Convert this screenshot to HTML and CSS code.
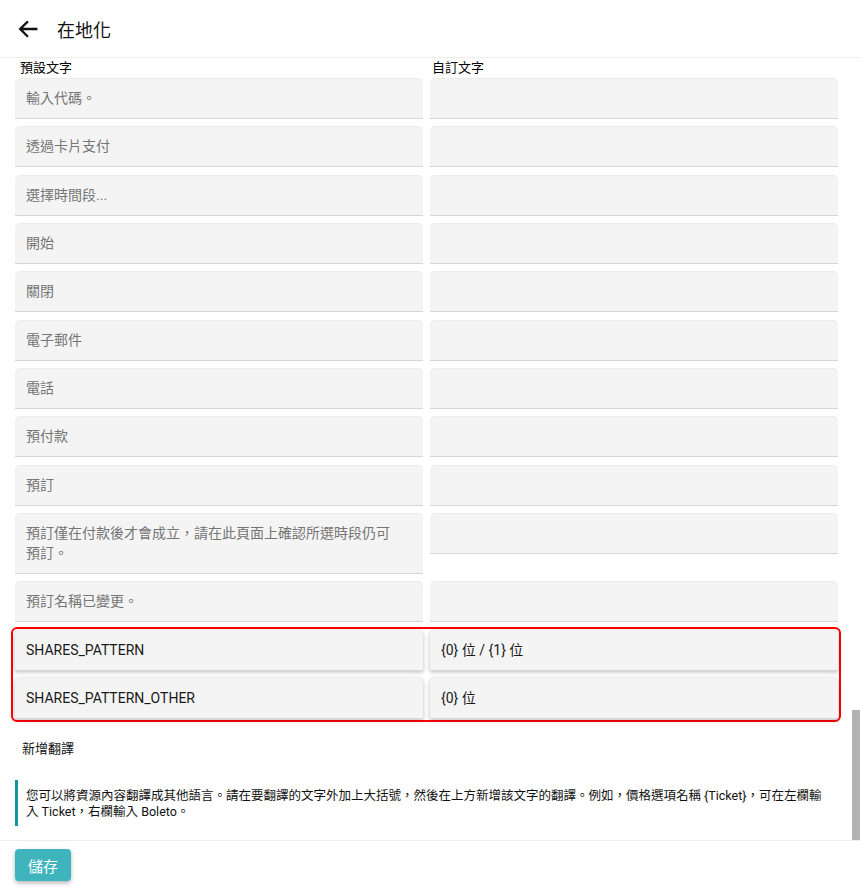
FILE: index.html
```html
<!DOCTYPE html>
<html lang="zh-Hant">
<head>
  <meta charset="UTF-8">
  <meta name="viewport" content="width=device-width, initial-scale=1.0">
  <title>在地化</title>
  <link rel="stylesheet" href="styles.css">
</head>
<body>
  <header class="topbar">
    <svg class="back-icon" viewBox="0 0 24 24" width="22" height="22">
      <path d="M21 12H4M11 4.5L3.5 12 11 19.5" fill="none" stroke="#111" stroke-width="2.6" stroke-linecap="square"/>
    </svg>
    <h1 class="title">在地化</h1>
  </header>

  <main class="content">
    <div class="col-labels">
      <span>預設文字</span>
      <span>自訂文字</span>
    </div>

    <div class="rows">
      <div class="row"><div class="field muted">輸入代碼。</div><div class="field"></div></div>
      <div class="row"><div class="field muted">透過卡片支付</div><div class="field"></div></div>
      <div class="row"><div class="field muted">選擇時間段...</div><div class="field"></div></div>
      <div class="row"><div class="field muted">開始</div><div class="field"></div></div>
      <div class="row"><div class="field muted">關閉</div><div class="field"></div></div>
      <div class="row"><div class="field muted">電子郵件</div><div class="field"></div></div>
      <div class="row"><div class="field muted">電話</div><div class="field"></div></div>
      <div class="row"><div class="field muted">預付款</div><div class="field"></div></div>
      <div class="row"><div class="field muted">預訂</div><div class="field"></div></div>
      <div class="row"><div class="field muted">預訂僅在付款後才會成立，請在此頁面上確認所選時段仍可預訂。</div><div class="field"></div></div>
      <div class="row"><div class="field muted">預訂名稱已變更。</div><div class="field"></div></div>

      <div class="highlight">
        <div class="row"><div class="field raised">SHARES_PATTERN</div><div class="field raised">{0} 位 / {1} 位</div></div>
        <div class="row"><div class="field raised">SHARES_PATTERN_OTHER</div><div class="field raised">{0} 位</div></div>
      </div>
    </div>

    <div class="add-link">新增翻譯</div>

    <div class="note">您可以將資源內容翻譯成其他語言。請在要翻譯的文字外加上大括號，然後在上方新增該文字的翻譯。例如，價格選項名稱 {Ticket}，可在左欄輸入 Ticket，右欄輸入 Boleto。</div>

    <div class="scroll-thumb"></div>
  </main>

  <footer class="bottombar">
    <button class="save-btn">儲存</button>
  </footer>
</body>
</html>
```

FILE: styles.css
```css
body {
  margin: 0;
  font-family: Roboto, "Noto Sans CJK TC", sans-serif;
  color: #222;
  background-color: #fff;
}

.topbar {
  display: flex;
  align-items: center;
  height: 57px;
  padding-left: 17px;
  border-bottom: 1px solid #eee;
}
.back-icon {
  display: block;
}
.title {
  margin: 0 0 0 18px;
  font-size: 18px;
  font-weight: normal;
  color: #111;
}

.content {
  position: relative;
  height: 782px;
  padding: 0 22px 0 15px;
  box-sizing: border-box;
}

.col-labels {
  display: grid;
  grid-template-columns: 408px 408px;
  column-gap: 7px;
  font-size: 13px;
  line-height: 20px;
  color: #000;
}
.col-labels span {
  padding-left: 5px;
}
.col-labels span + span {
  padding-left: 2px;
}

.rows {
  display: flex;
  flex-direction: column;
  gap: 7.33px;
}
.row {
  display: grid;
  grid-template-columns: 408px 408px;
  column-gap: 7px;
  align-items: start;
}
.field {
  min-height: 41px;
  box-sizing: border-box;
  padding: 10px 20px 10px 11px;
  font-size: 14px;
  line-height: 20px;
  background-color: #f4f4f4;
  border-bottom: 1px solid #d6d6d6;
  border-radius: 5px 5px 0 0;
  box-shadow: inset 0 1px 1px rgba(0, 0, 0, 0.04);
}
.field.muted {
  color: #757575;
}
.field.raised {
  color: #1a1a1a;
  box-shadow: 0 1px 4px rgba(0, 0, 0, 0.28);
}

.highlight {
  display: flex;
  flex-direction: column;
  gap: 7.33px;
  margin: -3px -3px -3px -4px;
  padding: 1px 1px 1px 2px;
  border: 2px solid #f00;
  border-radius: 6px;
}

.add-link {
  margin-top: 20px;
  padding-left: 7px;
  font-size: 13px;
  line-height: 20px;
  color: #111;
}

.note {
  margin-top: 21px;
  padding: 8px 14px 6px 8px;
  border-left: 3px solid #12979f;
  font-size: 12.5px;
  line-height: 16px;
  color: #111;
}

.scroll-thumb {
  position: absolute;
  right: 0;
  bottom: 0;
  width: 8px;
  height: 130px;
  background-color: #b3b3b3;
}

.bottombar {
  height: 48px;
  box-sizing: border-box;
  padding: 8px 15px 0;
  border-top: 1px solid #eee;
}
.save-btn {
  width: 56px;
  height: 32px;
  padding: 0;
  font-family: Roboto, "Noto Sans CJK TC", sans-serif;
  font-size: 15px;
  color: #fff;
  background-color: #40b4bd;
  border: none;
  border-radius: 4px;
  box-shadow: 0 2px 4px rgba(0, 0, 0, 0.3);
  cursor: pointer;
}
```
